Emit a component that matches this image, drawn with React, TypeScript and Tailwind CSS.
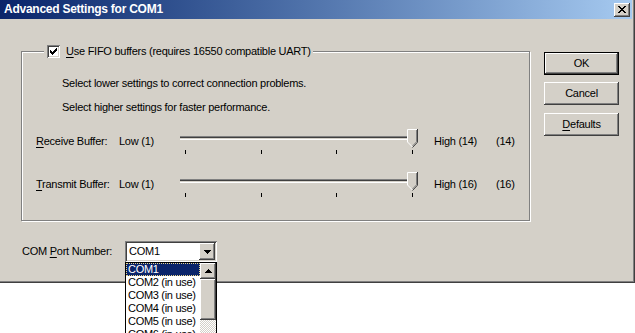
import React from "react";

const raised =
  "shadow-[inset_-1px_-1px_0_#404040,inset_1px_1px_0_#ffffff,inset_-2px_-2px_0_#808080,inset_2px_2px_0_#d4d0c8]";
const sunken =
  "shadow-[inset_1px_1px_0_#808080,inset_-1px_-1px_0_#ffffff,inset_2px_2px_0_#404040,inset_-2px_-2px_0_#d4d0c8]";

function Check() {
  const ys = [2, 3, 4, 3, 2, 1, 0];
  return (
    <svg width="13" height="13" viewBox="0 0 13 13" className="block" shapeRendering="crispEdges">
      {ys.map((y, i) => (
        <rect key={i} x={3 + i} y={3 + y} width={1} height={3} fill="#000" />
      ))}
    </svg>
  );
}

function Thumb() {
  return (
    <svg width="11" height="19" viewBox="0 0 11 19" className="block">
      <polygon points="0,0 11,0 11,13 5.5,18.5 0,13" fill="#d4d0c8" />
      <polyline points="0.5,13 0.5,0.5 10,0.5" fill="none" stroke="#fff" strokeWidth="1" />
      <polyline points="0.5,13 5.5,18" fill="none" stroke="#fff" strokeWidth="1" />
      <polyline points="10.5,0 10.5,13.2 5.5,18.5" fill="none" stroke="#404040" strokeWidth="1" />
      <polyline points="9.5,1 9.5,12.8 5.5,17" fill="none" stroke="#808080" strokeWidth="1" />
    </svg>
  );
}

function SliderRow({
  label,
  accel,
  high,
  value,
  className,
}: {
  label: string;
  accel: string;
  high: string;
  value: string;
  className?: string;
}) {
  return (
    <div className={"flex items-start h-[26px] pl-[14px] " + (className ?? "")}>
      <div className="w-[83px] pt-[6px] leading-[13px]">
        <span className="underline underline-offset-[2px]">{accel}</span>
        {label}
      </div>
      <div className="w-[61px] pt-[6px] leading-[13px]">Low (1)</div>
      <div className="relative w-[238px] h-[26px]">
        <div className="mt-[7px] h-[4px] w-[238px] border-t border-t-[#808080] border-b border-b-white bg-[#404040] shadow-[inset_0_-1px_0_#d4d0c8]" />
        <div className="mt-[10px] ml-[5px] w-[228px] flex justify-between">
          <div className="w-px h-[4px] bg-black" />
          <div className="w-px h-[4px] bg-black" />
          <div className="w-px h-[4px] bg-black" />
          <div className="w-px h-[4px] bg-black" />
        </div>
        <div className="absolute left-[227px] top-0">
          <Thumb />
        </div>
      </div>
      <div className="ml-[16px] w-[62px] pt-[6px] leading-[13px]">{high}</div>
      <div className="pt-[6px] leading-[13px]">{value}</div>
    </div>
  );
}

function Button({ children, def, className }: { children: React.ReactNode; def?: boolean; className?: string }) {
  if (def) {
    return (
      <div className={"w-[75px] h-[23px] border border-black " + (className ?? "")}>
        <div className={"w-full h-full flex items-center justify-center " + raised}>{children}</div>
      </div>
    );
  }
  return (
    <div className={"w-[75px] h-[23px] flex items-center justify-center " + raised + " " + (className ?? "")}>
      {children}
    </div>
  );
}

export default function App() {
  return (
    <div className="relative w-[635px] h-[333px] overflow-hidden bg-white text-[11px] tracking-[-0.25px] text-black font-['Liberation_Sans',Arial,sans-serif]">
      <div className="w-[635px] h-[283px] bg-[#d4d0c8] border-r border-b border-[#404040]">
        <div className="h-full border-r border-b border-[#808080] pr-px flex flex-col">
          {/* title bar */}
          <div className="h-[19px] shrink-0 flex items-center justify-between pl-[4px] pr-[2px] bg-linear-to-r from-[#0a246a] to-[#a6caf0]">
            <span className="text-white font-bold text-[12px] tracking-[-0.25px] leading-[19px]">Advanced Settings for COM1</span>
            <div className={"w-[16px] h-[14px] bg-[#d4d0c8] flex items-center justify-center " + raised}>
              <svg width="8" height="7" viewBox="0 0 8 7" className="block" shapeRendering="crispEdges">
                <path d="M0 0h2v1h-2zM6 0h2v1h-2zM1 1h2v1h-2zM5 1h2v1h-2zM2 2h4v1h-4zM3 3h2v1h-2zM2 4h4v1h-4zM1 5h2v1h-2zM5 5h2v1h-2zM0 6h2v1h-2zM6 6h2v1h-2z" fill="#000" />
              </svg>
            </div>
          </div>

          {/* body */}
          <div className="flex flex-col">
            <div className="flex items-start">
              {/* group box */}
              <div className="relative ml-[21px] mt-[32px] w-[509px] h-[170px] border border-[#808080] shadow-[inset_1px_1px_0_#ffffff,1px_1px_0_#ffffff]">
                <div className="absolute left-[22px] top-[-7px] h-[13px] pl-[3px] pr-[2px] bg-[#d4d0c8] flex items-center gap-[6px]">
                  <div className={"w-[13px] h-[13px] bg-white " + sunken}>
                    <Check />
                  </div>
                  <span className="leading-[13px]">
                    <span className="underline underline-offset-[2px]">U</span>se FIFO buffers (requires 16550 compatible UART)
                  </span>
                </div>
                <div className="flex flex-col pt-[25px]">
                  <p className="pl-[40px] leading-[13px]">Select lower settings to correct connection problems.</p>
                  <p className="pl-[40px] leading-[13px] mt-[11px]">Select higher settings for faster performance.</p>
                  <SliderRow className="mt-[15px]" accel="R" label="eceive Buffer:" high="High (14)" value="(14)" />
                  <SliderRow className="mt-[17px]" accel="T" label="ransmit Buffer:" high="High (16)" value="(16)" />
                </div>
              </div>
              {/* buttons */}
              <div className="ml-[14px] mt-[33px] flex flex-col">
                <Button def>OK</Button>
                <Button className="mt-[7px]">Cancel</Button>
                <Button className="mt-[8px]">
                  <span>
                    <span className="underline underline-offset-[2px]">D</span>efaults
                  </span>
                </Button>
              </div>
            </div>

            {/* COM port */}
            <div className="flex items-center mt-[20px] pl-[22px] h-[21px]">
              <span className="w-[103px] leading-[13px]">
                COM <span className="underline underline-offset-[2px]">P</span>ort Number:
              </span>
              <div className={"w-[92px] h-[21px] bg-white p-[2px] flex items-center " + sunken}>
                <span className="flex-1 pl-[2px] leading-[13px]">COM1</span>
                <div className={"w-[16px] h-[17px] bg-[#d4d0c8] flex items-center justify-center " + raised}>
                  <svg width="7" height="4" viewBox="0 0 7 4" className="block" shapeRendering="crispEdges">
                    <path d="M0 0h7v1h-7zM1 1h5v1h-5zM2 2h3v1h-3zM3 3h1v1h-1z" fill="#000" />
                  </svg>
                </div>
              </div>
            </div>
          </div>
        </div>
      </div>

      {/* dropdown list */}
      <div className="absolute left-[125px] top-[262px] w-[92px] h-[90px] border border-black bg-white flex">
        <div className="w-[74px] flex flex-col tracking-[-0.3px]">
          <div className="h-[13px] leading-[11px] pl-[1px] bg-[#0a246a] text-white border border-dotted border-[#e9d58a]">COM1</div>
          <div className="h-[13px] leading-[13px] pl-[2px]">COM2 (in use)</div>
          <div className="h-[13px] leading-[13px] pl-[2px]">COM3 (in use)</div>
          <div className="h-[13px] leading-[13px] pl-[2px]">COM4 (in use)</div>
          <div className="h-[13px] leading-[13px] pl-[2px]">COM5 (in use)</div>
          <div className="h-[13px] leading-[13px] pl-[2px]">COM6 (in use)</div>
        </div>
        <div className="w-[16px] flex flex-col">
          <div className={"w-[16px] h-[16px] bg-[#d4d0c8] flex items-center justify-center " + raised}>
            <svg width="7" height="4" viewBox="0 0 7 4" className="block" shapeRendering="crispEdges">
              <path d="M3 0h1v1h-1zM2 1h3v1h-3zM1 2h5v1h-5zM0 3h7v1h-7z" fill="#000" />
            </svg>
          </div>
          <div className={"w-[16px] h-[41px] bg-[#d4d0c8] " + raised} />
          <div className="flex-1 bg-[repeating-conic-gradient(#d4d0c8_0%_25%,#ffffff_0%_50%)] bg-[length:2px_2px]" />
        </div>
      </div>
    </div>
  );
}
